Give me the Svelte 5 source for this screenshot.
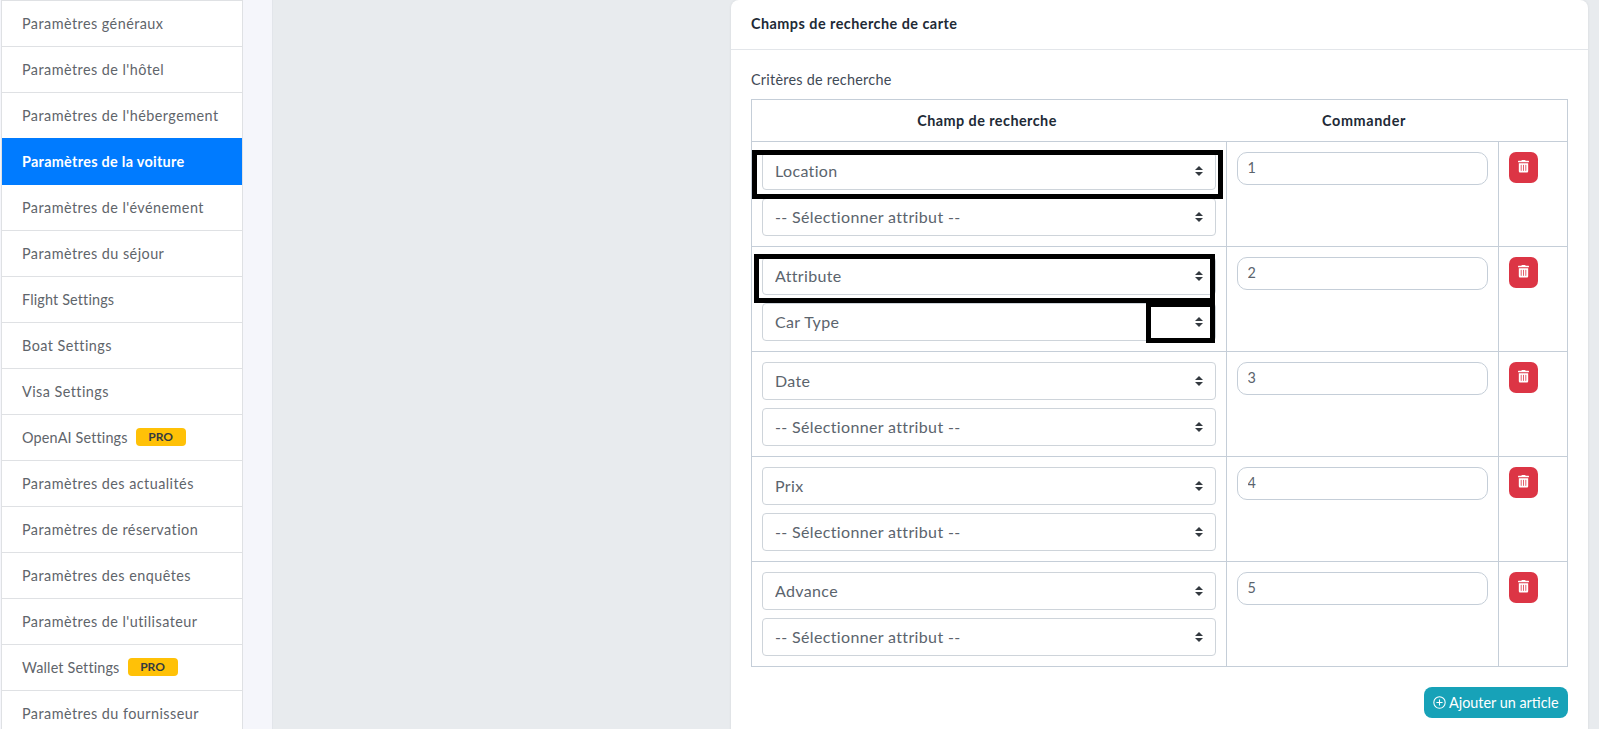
<script>
  const menu = [
    { label: "Paramètres généraux" },
    { label: "Paramètres de l'hôtel" },
    { label: "Paramètres de l'hébergement" },
    { label: "Paramètres de la voiture", active: true },
    { label: "Paramètres de l'événement" },
    { label: "Paramètres du séjour" },
    { label: "Flight Settings", tight: true },
    { label: "Boat Settings" },
    { label: "Visa Settings" },
    { label: "OpenAI Settings", pro: true, tight: true },
    { label: "Paramètres des actualités" },
    { label: "Paramètres de réservation" },
    { label: "Paramètres des enquêtes" },
    { label: "Paramètres de l'utilisateur" },
    { label: "Wallet Settings", pro: true, tight: true },
    { label: "Paramètres du fournisseur" },
  ];

  const placeholder = "-- Sélectionner attribut --";
  const rows = [
    { field: "Location", attr: placeholder, order: 1 },
    { field: "Attribute", attr: "Car Type", order: 2 },
    { field: "Date", attr: placeholder, order: 3 },
    { field: "Prix", attr: placeholder, order: 4 },
    { field: "Advance", attr: placeholder, order: 5 },
  ];
</script>

<div class="page">
  <aside class="side">
    <ul class="menu">
      {#each menu as item}
        <li class:active={item.active} class:tight={item.tight}>
          <span>{item.label}</span>
          {#if item.pro}<span class="pro">PRO</span>{/if}
        </li>
      {/each}
    </ul>
  </aside>

  <main class="main">
    <section class="card">
      <header class="card-head">Champs de recherche de carte</header>
      <div class="card-body">
        <div class="label">Critères de recherche</div>
        <table>
          <thead>
            <tr>
              <th class="c-field">Champ de recherche</th>
              <th class="c-order">Commander</th>
              <th class="c-del"></th>
            </tr>
          </thead>
          <tbody>
            {#each rows as row}
              <tr>
                <td>
                  <select class="sel"><option>{row.field}</option></select>
                  <select class="sel"><option>{row.attr}</option></select>
                </td>
                <td><input class="num" type="text" value={row.order} /></td>
                <td>
                  <button class="del" aria-label="Supprimer">
                    <svg viewBox="0 0 448 512" width="11" height="12.5">
                      <path fill="currentColor" d="M32 464a48 48 0 0 0 48 48h288a48 48 0 0 0 48-48V128H32zm272-256a16 16 0 0 1 32 0v224a16 16 0 0 1-32 0zm-96 0a16 16 0 0 1 32 0v224a16 16 0 0 1-32 0zm-96 0a16 16 0 0 1 32 0v224a16 16 0 0 1-32 0zM432 32H312l-9.4-18.7A24 24 0 0 0 281.1 0H166.8a23.72 23.72 0 0 0-21.4 13.3L136 32H16A16 16 0 0 0 0 48v32a16 16 0 0 0 16 16h416a16 16 0 0 0 16-16V48a16 16 0 0 0-16-16z" />
                    </svg>
                  </button>
                </td>
              </tr>
            {/each}
          </tbody>
        </table>
        <div class="actions">
          <button class="add">
            <svg viewBox="0 0 16 16" width="13" height="13" fill="none" stroke="currentColor" stroke-width="1.3">
              <circle cx="8" cy="8" r="7" />
              <path d="M8 4.2v7.6M4.2 8h7.6" />
            </svg>
            Ajouter un article
          </button>
        </div>
      </div>

      <!-- black annotation boxes drawn over the screenshot -->
      <div class="mark m1"></div>
      <div class="mark m2"></div>
      <div class="mark m3"></div>
    </section>
  </main>
</div>

<style>
  :global(body) {
    margin: 0;
    font-family: "Lato", "Liberation Sans", sans-serif;
  }

  .page {
    display: flex;
    height: 729px;
    overflow: hidden;
    background: #e8ebee;
  }

  .side {
    width: 273px;
    flex: none;
    box-sizing: border-box;
    padding-left: 1px;
    background: #f5f6fb;
    border-right: 1px solid #e2e5ea;
  }

  .menu {
    list-style: none;
    margin: 0;
    padding: 0;
    width: 242px;
    box-sizing: border-box;
    background: #fff;
    border: 1px solid #dfe1e4;
    border-bottom: none;
  }

  .menu li {
    display: flex;
    align-items: center;
    gap: 8px;
    box-sizing: border-box;
    height: 46px;
    padding-left: 20px;
    padding-bottom: 1px;
    border-top: 1px solid #dfe1e4;
    font-size: 14.4px;
    letter-spacing: 0.45px;
    color: #5f656b;
  }

  .menu li:first-child {
    height: 45px;
    border-top: none;
  }

  .menu li.tight {
    letter-spacing: 0.15px;
  }

  .menu li.active {
    background: #007bff;
    border-top-color: #007bff;
    color: #fff;
    font-weight: 700;
    letter-spacing: 0.3px;
  }

  .menu li.active + li {
    border-top-color: #007bff;
  }

  .pro {
    width: 50px;
    height: 18px;
    line-height: 18px;
    text-align: center;
    border-radius: 4px;
    background: #ffc107;
    color: #343a40;
    font-size: 12px;
    font-weight: 700;
    letter-spacing: 0;
  }

  .main {
    flex: 1;
    padding: 0 11px 0 458px;
    min-width: 0;
  }

  .card {
    position: relative;
    background: #fff;
    border-radius: 8px 8px 0 0;
    height: 760px;
    box-shadow: 0 0 3px rgba(0, 0, 0, 0.08);
  }

  .card-head {
    height: 50px;
    box-sizing: border-box;
    padding: 15px 20px 0;
    border-bottom: 1px solid #e3e6ea;
    font-size: 14.4px;
    font-weight: 700;
    letter-spacing: 0.47px;
    color: #212a36;
  }

  .card-body {
    padding: 21px 20px 0;
  }

  .label {
    height: 28px;
    font-size: 14.4px;
    letter-spacing: 0.25px;
    line-height: 18px;
    color: #3f4a56;
  }

  table {
    width: 817px;
    border-collapse: collapse;
    table-layout: fixed;
  }

  th,
  td {
    border: 1px solid #c5ced8;
    vertical-align: top;
  }

  th {
    height: 41px;
    padding: 0;
    vertical-align: middle;
    border-left: none;
    border-right: none;
    font-size: 14.4px;
    font-weight: 700;
    letter-spacing: 0.45px;
    color: #212a36;
  }

  th:first-child {
    border-left: 1px solid #c5ced8;
  }

  th:last-child {
    border-right: 1px solid #c5ced8;
  }

  td {
    padding: 10px;
  }

  .c-field {
    width: 470px;
    padding-right: 4px;
  }

  .c-order {
    width: 268px;
    padding-left: 4px;
    letter-spacing: 0.6px;
  }

  .sel {
    display: block;
    width: 100%;
    height: 38px;
    box-sizing: border-box;
    margin: 0 0 8px;
    padding: 0 24px 2px 12px;
    appearance: none;
    border: 1px solid #ced4da;
    border-radius: 4px;
    background: #fff url("data:image/svg+xml,%3csvg xmlns='http://www.w3.org/2000/svg' width='4' height='5' viewBox='0 0 4 5'%3e%3cpath fill='%23343a40' d='M2 0L0 2h4zm0 5L0 3h4z'/%3e%3c/svg%3e") no-repeat right 12px center / 8px 10px;
    font-family: inherit;
    font-size: 16px;
    letter-spacing: 0.35px;
    color: #5b646d;
  }

  .sel:last-child {
    margin-bottom: 0;
  }

  .num {
    display: block;
    width: 100%;
    height: 33px;
    box-sizing: border-box;
    padding: 0 10px 2px;
    border: 1px solid #c5ced8;
    border-radius: 10px;
    font-family: inherit;
    font-size: 14.4px;
    color: #5b646d;
  }

  .del {
    display: flex;
    align-items: center;
    justify-content: center;
    width: 29px;
    height: 31px;
    padding: 0 0 2px;
    border: none;
    border-radius: 7px;
    background: #dc3545;
    color: #fff;
  }

  .actions {
    display: flex;
    justify-content: flex-end;
    padding-top: 20px;
    width: 817px;
  }

  .add {
    display: flex;
    align-items: center;
    gap: 3px;
    height: 31px;
    width: 144px;
    box-sizing: border-box;
    padding: 0 0 0 9px;
    border: none;
    border-radius: 8px;
    background: #17a2b8;
    color: #fff;
    font-family: inherit;
    font-size: 14.4px;
    letter-spacing: 0;
    white-space: nowrap;
  }

  .mark {
    position: absolute;
    box-sizing: border-box;
    border: 5px solid #000;
  }

  .m1 {
    left: 21px;
    top: 150px;
    width: 471px;
    height: 49px;
  }

  .m2 {
    left: 23px;
    top: 254px;
    width: 461px;
    height: 49px;
  }

  .m3 {
    left: 415px;
    top: 302px;
    width: 69px;
    height: 41px;
  }
</style>
